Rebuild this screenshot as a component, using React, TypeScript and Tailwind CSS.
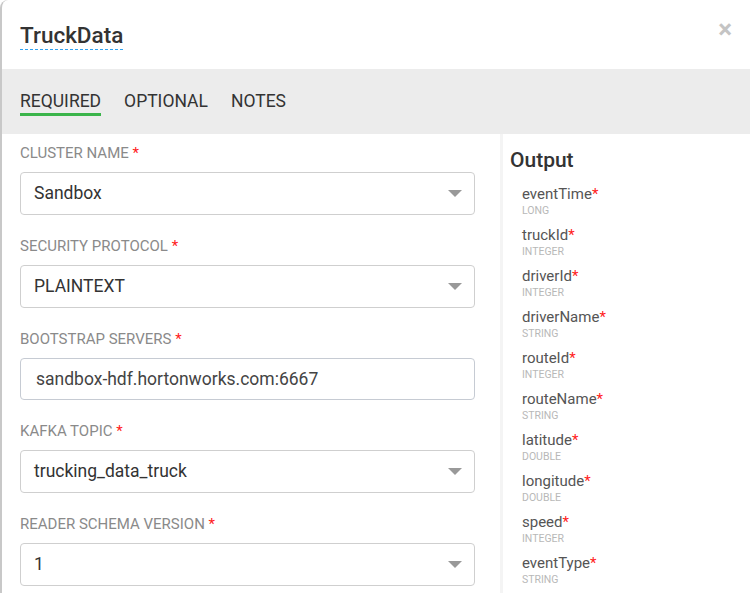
import React from 'react';

type Field = { label: string; value: string; kind: 'select' | 'input' };

const fields: Field[] = [
  { label: 'Cluster Name', value: 'Sandbox', kind: 'select' },
  { label: 'Security Protocol', value: 'PLAINTEXT', kind: 'select' },
  { label: 'Bootstrap Servers', value: 'sandbox-hdf.hortonworks.com:6667', kind: 'input' },
  { label: 'Kafka Topic', value: 'trucking_data_truck', kind: 'select' },
  { label: 'Reader Schema Version', value: '1', kind: 'select' },
];

const outputs: [string, string][] = [
  ['eventTime', 'LONG'],
  ['truckId', 'INTEGER'],
  ['driverId', 'INTEGER'],
  ['driverName', 'STRING'],
  ['routeId', 'INTEGER'],
  ['routeName', 'STRING'],
  ['latitude', 'DOUBLE'],
  ['longitude', 'DOUBLE'],
  ['speed', 'INTEGER'],
  ['eventType', 'STRING'],
];

const FormField: React.FC<{ field: Field }> = ({ field }) => (
  <div className="mb-[22px]">
    <label className="block text-[15px] leading-[18px] uppercase text-[#8a8a8a] mb-[10px]">
      {field.label} <span className="text-[#ff2020]">*</span>
    </label>
    {field.kind === 'select' ? (
      <div className="h-[43px] flex items-center justify-between border border-[#cfcfcf] rounded-[4px] pl-[13px] pr-[12px] text-[17.5px] text-[#333]">
        <span>{field.value}</span>
        <svg width="14" height="7" viewBox="0 0 14 7">
          <path d="M0 0 L14 0 L7 7 Z" fill="#999" />
        </svg>
      </div>
    ) : (
      <div className="h-[42px] flex items-center border border-[#c6cbd3] rounded-[4px] pl-[15px] text-[17.5px] text-[#444]">
        {field.value}
      </div>
    )}
  </div>
);

export default function App() {
  return (
    <div className="w-[750px] h-[593px] overflow-hidden bg-white" style={{ fontFamily: 'Roboto, "Liberation Sans", sans-serif' }}>
      <div className="h-full border-l-2 border-[#c8c8c8] rounded-tl-[8px] overflow-hidden">
        <div className="h-[69px] flex items-start justify-between pl-[18px] pr-[18px]">
          <h1 className="mt-[22px] text-[22.5px] leading-[26px] font-medium text-[#333] border-b border-dashed border-[#2ea3f2] pb-[1px]">
            TruckData
          </h1>
          <span className="mt-[16px] text-[26px] leading-[26px] font-bold text-[#c4c4c4]">×</span>
        </div>
        <div className="h-[65px] bg-[#ececec] flex items-start gap-[23px] pl-[18px]">
          <div className="mt-[22px] text-[17.5px] leading-[20px] text-[#333] border-b-[3px] border-[#3ab44a] pb-[2px]">REQUIRED</div>
          <div className="mt-[22px] text-[17.5px] leading-[20px] text-[#333]">OPTIONAL</div>
          <div className="mt-[22px] text-[17.5px] leading-[20px] text-[#333]">NOTES</div>
        </div>
        <div className="flex">
          <div className="w-[498px] shrink-0 pl-[18px] pr-[25px] pt-[10px]">
            {fields.map((f) => (
              <FormField key={f.label} field={f} />
            ))}
          </div>
          <div className="flex-1 border-l-[3px] border-[#f4f4f4] pl-[7px] pt-[13px]">
            <h2 className="text-[21px] leading-[26px] font-medium text-[#333] mb-[12px]">Output</h2>
            <div className="pl-[12px]">
              {outputs.map(([name, type]) => (
                <div key={name} className="h-[41px]">
                  <div className="text-[15px] leading-[18px] text-[#555]">
                    {name}
                    <span className="text-[#ff2020]">*</span>
                  </div>
                  <div className="text-[10.5px] leading-[16px] text-[#b8b8b8] uppercase">{type}</div>
                </div>
              ))}
            </div>
          </div>
        </div>
      </div>
    </div>
  );
}
